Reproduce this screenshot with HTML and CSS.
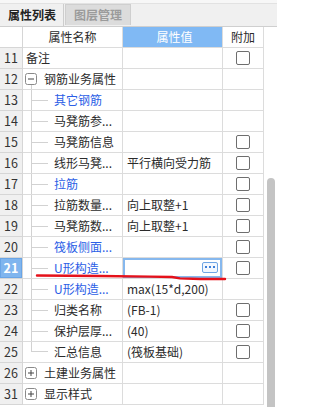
FILE: index.html
```html
<!DOCTYPE html>
<html lang="zh">
<head>
<meta charset="utf-8">
<link rel="stylesheet" href="styles.css">
</head>
<body>
<div class="panel">
  <div class="tabbar">
    <div class="tab active">属性列表</div>
    <div class="tab inactive">图层管理</div>
  </div>
  <div class="body">
    <div class="table">
      <div class="row head">
        <div class="cell num"></div>
        <div class="cell name center">属性名称</div>
        <div class="cell val center hl">属性值</div>
        <div class="cell add center">附加</div>
      </div>

      <div class="row">
        <div class="cell num">11</div>
        <div class="cell name top"><span class="label">备注</span></div>
        <div class="cell val"></div>
        <div class="cell add"><span class="chk"></span></div>
      </div>

      <div class="row">
        <div class="cell num">12</div>
        <div class="cell name">
          <span class="toggle-wrap"><span class="spacer"></span><svg class="toggle" width="12" height="12" viewBox="0 0 12 12"><rect x="0.5" y="0.5" width="11" height="11" rx="2" fill="#fff" stroke="#8a8a8a"/><line x1="3" y1="6" x2="9" y2="6" stroke="#444"/></svg><span class="stem"></span></span>
          <span class="label group">钢筋业务属性</span>
        </div>
        <div class="cell val"></div>
        <div class="cell add"></div>
      </div>

      <div class="row">
        <div class="cell num">13</div>
        <div class="cell name"><span class="branch"><span class="h"></span></span><span class="label blue">其它钢筋</span></div>
        <div class="cell val"></div>
        <div class="cell add"></div>
      </div>

      <div class="row">
        <div class="cell num">14</div>
        <div class="cell name"><span class="branch"><span class="h"></span></span><span class="label">马凳筋参...</span></div>
        <div class="cell val"></div>
        <div class="cell add"></div>
      </div>

      <div class="row">
        <div class="cell num">15</div>
        <div class="cell name"><span class="branch"><span class="h"></span></span><span class="label">马凳筋信息</span></div>
        <div class="cell val"></div>
        <div class="cell add"><span class="chk"></span></div>
      </div>

      <div class="row">
        <div class="cell num">16</div>
        <div class="cell name"><span class="branch"><span class="h"></span></span><span class="label">线形马凳...</span></div>
        <div class="cell val">平行横向受力筋</div>
        <div class="cell add"><span class="chk"></span></div>
      </div>

      <div class="row">
        <div class="cell num">17</div>
        <div class="cell name"><span class="branch"><span class="h"></span></span><span class="label blue">拉筋</span></div>
        <div class="cell val"></div>
        <div class="cell add"><span class="chk"></span></div>
      </div>

      <div class="row">
        <div class="cell num">18</div>
        <div class="cell name"><span class="branch"><span class="h"></span></span><span class="label">拉筋数量...</span></div>
        <div class="cell val">向上取整+1</div>
        <div class="cell add"><span class="chk"></span></div>
      </div>

      <div class="row">
        <div class="cell num">19</div>
        <div class="cell name"><span class="branch"><span class="h"></span></span><span class="label">马凳筋数...</span></div>
        <div class="cell val">向上取整+1</div>
        <div class="cell add"><span class="chk"></span></div>
      </div>

      <div class="row">
        <div class="cell num">20</div>
        <div class="cell name"><span class="branch"><span class="h"></span></span><span class="label blue">筏板侧面...</span></div>
        <div class="cell val"></div>
        <div class="cell add"><span class="chk"></span></div>
      </div>

      <div class="row">
        <div class="cell num selected">21</div>
        <div class="cell name"><span class="branch"><span class="h"></span></span><span class="label blue">U形构造...</span></div>
        <div class="cell val editing"><span class="more"><i></i><i></i><i></i></span></div>
        <div class="cell add"><span class="chk"></span></div>
      </div>

      <div class="row">
        <div class="cell num">22</div>
        <div class="cell name"><span class="branch"><span class="h"></span></span><span class="label blue">U形构造...</span></div>
        <div class="cell val">max(15*d,200)</div>
        <div class="cell add"></div>
      </div>

      <div class="row">
        <div class="cell num">23</div>
        <div class="cell name"><span class="branch"><span class="h"></span></span><span class="label">归类名称</span></div>
        <div class="cell val">(FB-1)</div>
        <div class="cell add"><span class="chk"></span></div>
      </div>

      <div class="row">
        <div class="cell num">24</div>
        <div class="cell name"><span class="branch"><span class="h"></span></span><span class="label">保护层厚...</span></div>
        <div class="cell val">(40)</div>
        <div class="cell add"><span class="chk"></span></div>
      </div>

      <div class="row">
        <div class="cell num">25</div>
        <div class="cell name"><span class="branch last"><span class="h"></span></span><span class="label">汇总信息</span></div>
        <div class="cell val">(筏板基础)</div>
        <div class="cell add"><span class="chk"></span></div>
      </div>

      <div class="row">
        <div class="cell num">26</div>
        <div class="cell name">
          <span class="toggle-wrap"><span class="spacer"></span><svg class="toggle" width="12" height="12" viewBox="0 0 12 12"><rect x="0.5" y="0.5" width="11" height="11" rx="2" fill="#fff" stroke="#8a8a8a"/><line x1="3" y1="6" x2="9" y2="6" stroke="#444"/><line x1="6" y1="3" x2="6" y2="9" stroke="#444"/></svg><span class="spacer"></span></span>
          <span class="label group">土建业务属性</span>
        </div>
        <div class="cell val"></div>
        <div class="cell add"></div>
      </div>

      <div class="row">
        <div class="cell num">31</div>
        <div class="cell name">
          <span class="toggle-wrap"><span class="spacer"></span><svg class="toggle" width="12" height="12" viewBox="0 0 12 12"><rect x="0.5" y="0.5" width="11" height="11" rx="2" fill="#fff" stroke="#8a8a8a"/><line x1="3" y1="6" x2="9" y2="6" stroke="#444"/><line x1="6" y1="3" x2="6" y2="9" stroke="#444"/></svg><span class="spacer"></span></span>
          <span class="label group">显示样式</span>
        </div>
        <div class="cell val"></div>
        <div class="cell add"></div>
      </div>
    </div>
    <div class="scroll"><div class="thumb"></div></div>
  </div>
  <svg class="annot" width="277" height="407" viewBox="0 0 277 407">
    <polyline points="37,275.5 100,276 150,276.6 172,277 180,278.4 200,279 225,279" fill="none" stroke="#e5111a" stroke-width="2.4" stroke-linecap="round" stroke-linejoin="round"/>
  </svg>
</div>
</body>
</html>
```

FILE: styles.css
```css
* { box-sizing: border-box; }

html, body {
  margin: 0;
  padding: 0;
  background: #ffffff;
}

body {
  font-family: "Noto Sans CJK SC", "Noto Sans", sans-serif;
  font-size: 12px;
  color: #2b2b2b;
}

.panel {
  position: relative;
  width: 277px;
  height: 407px;
  overflow: hidden;
  background: #fff;
}

.tabbar {
  height: 27px;
  display: flex;
  align-items: stretch;
  padding-top: 4px;
  background: linear-gradient(#f7f7f7 0, #f7f7f7 3px, #e2e2e2 3px, #e2e2e2 4px, #f0f0f0 4px);
  border-bottom: 1px solid #cfcfcf;
}

.tab {
  display: flex;
  align-items: center;
  font-weight: bold;
  font-size: 12px;
  line-height: 14px;
}

.tab.active {
  width: 64px;
  padding-left: 8px;
  background: #f0f0f0;
  color: #222;
  border-right: 1px solid #cdcdcd;
}

.tab.inactive {
  width: 66px;
  margin-left: 1px;
  margin-bottom: 1px;
  justify-content: center;
  background: #dcdcdc;
  color: #9b9b9b;
  border: 1px solid #cfcfcf;
  border-bottom: none;
}

.body {
  display: flex;
  height: 380px;
}

.table {
  width: 264px;
  display: flex;
  flex-direction: column;
}

.row {
  display: grid;
  grid-template-columns: 23px 100px 100px 41px;
  height: 21px;
  flex: none;
}

.row.head {
  height: 21px;
}

.cell {
  display: flex;
  align-items: center;
  border-right: 1px solid #dcdcdc;
  border-bottom: 1px solid #dcdcdc;
  line-height: 14px;
  white-space: nowrap;
  overflow: hidden;
}

.cell.center {
  justify-content: center;
}

.head .cell {
  color: #2b2b2b;
}

.head .cell.hl {
  background: #80b9f4;
  color: #ffffff;
}

.head .cell.num {
  background: #ffffff;
}

.cell.num {
  justify-content: center;
  background: #f0f0f0;
  color: #333;
  font-size: 12.5px;
  border-color: #d6d6d6;
}

.cell.num.selected {
  background: #80b5ee;
  color: #ffffff;
  font-weight: bold;
  box-shadow: inset 0 0 0 1px #6aa5e6;
}

.cell.name.top {
  padding-left: 3px;
}

.cell.val {
  padding-left: 4px;
  color: #2b2b2b;
}

.cell.val.editing {
  justify-content: flex-end;
  padding-right: 4px;
  box-shadow: inset 0 0 0 2px #86b8ee;
}

.more {
  width: 16px;
  height: 11px;
  border: 1px solid #6ea5e4;
  border-radius: 2px;
  background: #f2f7fe;
  display: flex;
  align-items: center;
  justify-content: center;
  gap: 2px;
  margin-top: -2px;
}

.more i {
  width: 2px;
  height: 2px;
  background: #3d7fd8;
}

.cell.add {
  justify-content: center;
}

.chk {
  width: 14px;
  height: 14px;
  border: 1px solid #6e6e6e;
  border-radius: 2px;
  background: #fff;
}

.label {
  color: #2b2b2b;
}

.label.blue {
  color: #2b5ee6;
}

.label.group {
  margin-left: 7px;
}

.toggle-wrap {
  align-self: stretch;
  width: 12px;
  margin-left: 2px;
  display: flex;
  flex-direction: column;
  align-items: flex-start;
}

.toggle-wrap .spacer {
  flex: 1;
}

.toggle {
  display: block;
  flex: none;
}

.stem {
  flex: 1;
  width: 1px;
  margin-left: 6px;
  background: #d2d2d2;
}

.branch {
  align-self: stretch;
  width: 17px;
  margin-left: 8px;
  margin-right: 6px;
  border-left: 1px solid #d2d2d2;
  display: flex;
  align-items: center;
  flex: none;
}

.branch.last {
  align-self: flex-start;
  height: 10px;
  align-items: flex-end;
}

.branch .h {
  width: 16px;
  height: 1px;
  background: #d2d2d2;
}

.scroll {
  width: 13px;
  display: flex;
  flex-direction: column;
  padding-top: 151px;
  background: #ffffff;
}

.thumb {
  flex: 1;
  width: 8px;
  margin-left: 3px;
  border-radius: 4px 4px 0 0;
  background: #c4c4c4;
}

.annot {
  position: absolute;
  left: 0;
  top: 0;
  pointer-events: none;
}
```
